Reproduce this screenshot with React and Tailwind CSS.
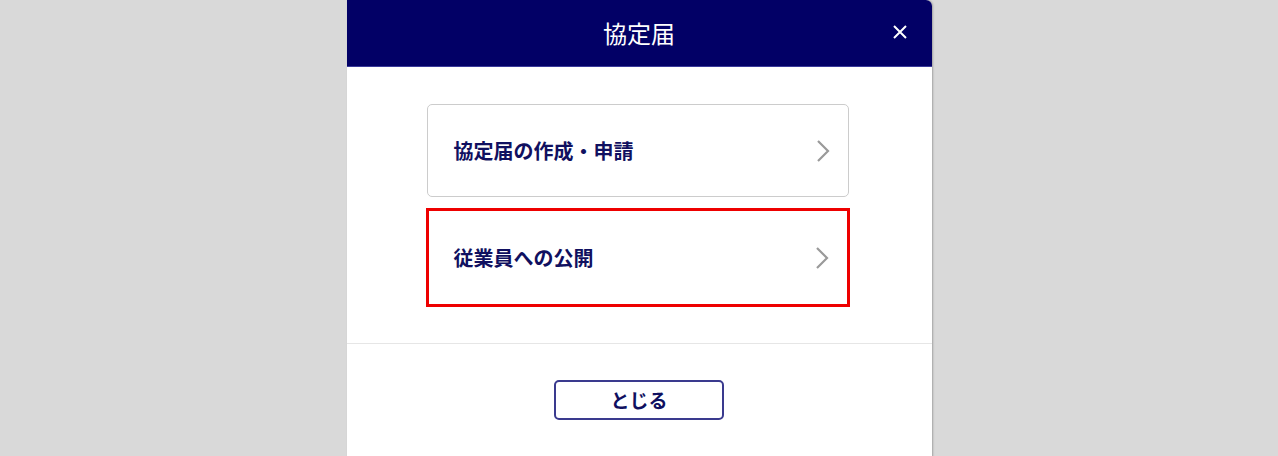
export default function App() {
  const font = { fontFamily: '"Noto Sans CJK JP", "Noto Sans", sans-serif' };
  const Chevron = () => (
    <svg width="14" height="24" viewBox="0 0 14 24" fill="none" className="shrink-0">
      <path d="M2 2 L12 12 L2 22" stroke="#9a9a9a" strokeWidth="2.2" />
    </svg>
  );
  return (
    <div className="w-[1278px] h-[456px] bg-[#d9d9d9] flex justify-center overflow-hidden" style={font}>
      <div className="w-[585px] h-[470px] bg-white rounded-tr-[6px] flex flex-col shadow-[1px_0_2px_rgba(0,0,0,0.25)]">
        <div className="h-[67px] bg-[#020066] border-b border-[#3a3a9a] relative flex items-center justify-center rounded-tr-[6px]">
          <span className="text-white text-[24px] leading-none">協定届</span>
          <svg className="absolute right-[24px] top-[24px]" width="16" height="16" viewBox="0 0 16 16">
            <path d="M2 2 L14 14 M14 2 L2 14" stroke="white" strokeWidth="2" />
          </svg>
        </div>
        <div className="flex flex-col pt-[37px] pl-[80px] pr-[83px] pb-[36px] gap-[11px]">
          <div className="h-[93px] border border-[#cccccc] rounded-[5px] flex items-center justify-between pl-[26px] pr-[18px]">
            <span className="text-[20px] font-bold text-[#101060]">協定届の作成・申請</span>
            <Chevron />
          </div>
          <div className="h-[99px] border-[3px] border-[#ee0000] mx-[-1px] flex items-center justify-between pl-[25px] pr-[18px]">
            <span className="text-[20px] font-bold text-[#101060]">従業員への公開</span>
            <Chevron />
          </div>
        </div>
        <div className="border-t border-[#e6e6e6] flex justify-center pt-[36px]">
          <div className="w-[170px] h-[40px] border-2 border-[#3a3a8e] rounded-[5px] flex items-center justify-center">
            <span className="text-[19px] font-bold text-[#101060]">とじる</span>
          </div>
        </div>
      </div>
    </div>
  );
}
